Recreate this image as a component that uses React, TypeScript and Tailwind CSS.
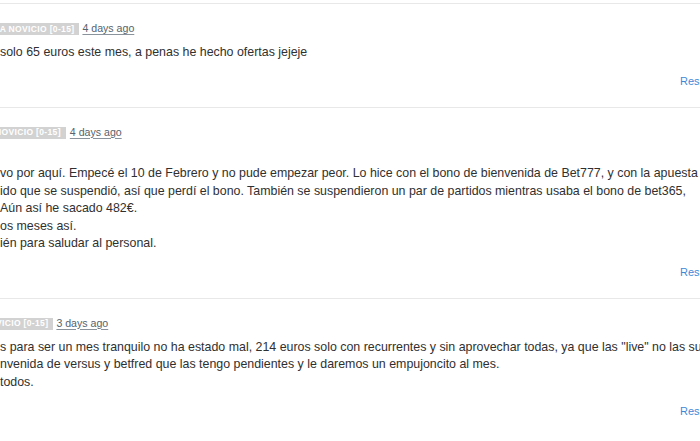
import type { ReactNode } from "react";

type CommentProps = {
  badge: string;
  badgeClass: string;
  date: string;
  dateClass: string;
  lines: ReactNode[];
  gapLine?: boolean;
};

const Comment = ({ badge, badgeClass, date, dateClass, lines, gapLine }: CommentProps) => (
  <div className="border-t border-[#e8e8e8] pt-[18px] pb-[18px]">
    <div className="flex h-[14px] items-center">
      <span
        className={`flex h-[12px] items-center whitespace-nowrap bg-[#d2d2d2] pr-[5px] text-[8.5px] font-bold uppercase tracking-[0.35px] text-white ${badgeClass}`}
      >
        {badge}
      </span>
      <a
        href="#"
        className={`whitespace-nowrap text-[10.6px] text-[#56626d] underline underline-offset-[2px] decoration-[#8a939b] ${dateClass}`}
      >
        {date}
      </a>
    </div>
    <div className="mt-[8px] text-[12.4px] leading-[17.5px] text-[#303030]">
      {gapLine ? <div className="h-[17.5px]" /> : null}
      {lines.map((line, i) => (
        <div key={i} className="whitespace-nowrap">
          {line}
        </div>
      ))}
    </div>
    <div className="mt-[13px] flex h-[14px] items-center">
      <a href="#" className="ml-[680px] whitespace-nowrap text-[11px] text-[#3f88d8]">
        Responder
      </a>
    </div>
  </div>
);

export default function App() {
  return (
    <div className="h-[441px] w-[700px] overflow-hidden bg-white pt-[3px] font-['Liberation_Sans',Arial,sans-serif]">
      <Comment
        badge="IA NOVICIO [0-15]"
        badgeClass="-ml-[3px] pl-0"
        date="4 days ago"
        dateClass="ml-[3px]"
        lines={["solo 65 euros este mes, a penas he hecho ofertas jejeje"]}
      />
      <Comment
        badge="NOVICIO [0-15]"
        badgeClass="-ml-[5px] pl-0"
        date="4 days ago"
        dateClass="ml-[4px]"
        gapLine
        lines={[
          "vo por aquí. Empecé el 10 de Febrero y no pude empezar peor. Lo hice con el bono de bienvenida de Bet777, y con la apuesta",
          "ido que se suspendió, así que perdí el bono. También se suspendieron un par de partidos mientras usaba el bono de bet365,",
          " Aún así he sacado 482€.",
          "os meses así.",
          "ién para saludar al personal.",
        ]}
      />
      <Comment
        badge="VICIO [0-15]"
        badgeClass="-ml-[4px] pl-0"
        date="3 days ago"
        dateClass="ml-[3px]"
        lines={[
          's para ser un mes tranquilo no ha estado mal, 214 euros solo con recurrentes y sin aprovechar todas, ya que las "live" no las sumo',
          "nvenida de versus y betfred que las tengo pendientes y le daremos un empujoncito al mes.",
          "todos.",
        ]}
      />
    </div>
  );
}
